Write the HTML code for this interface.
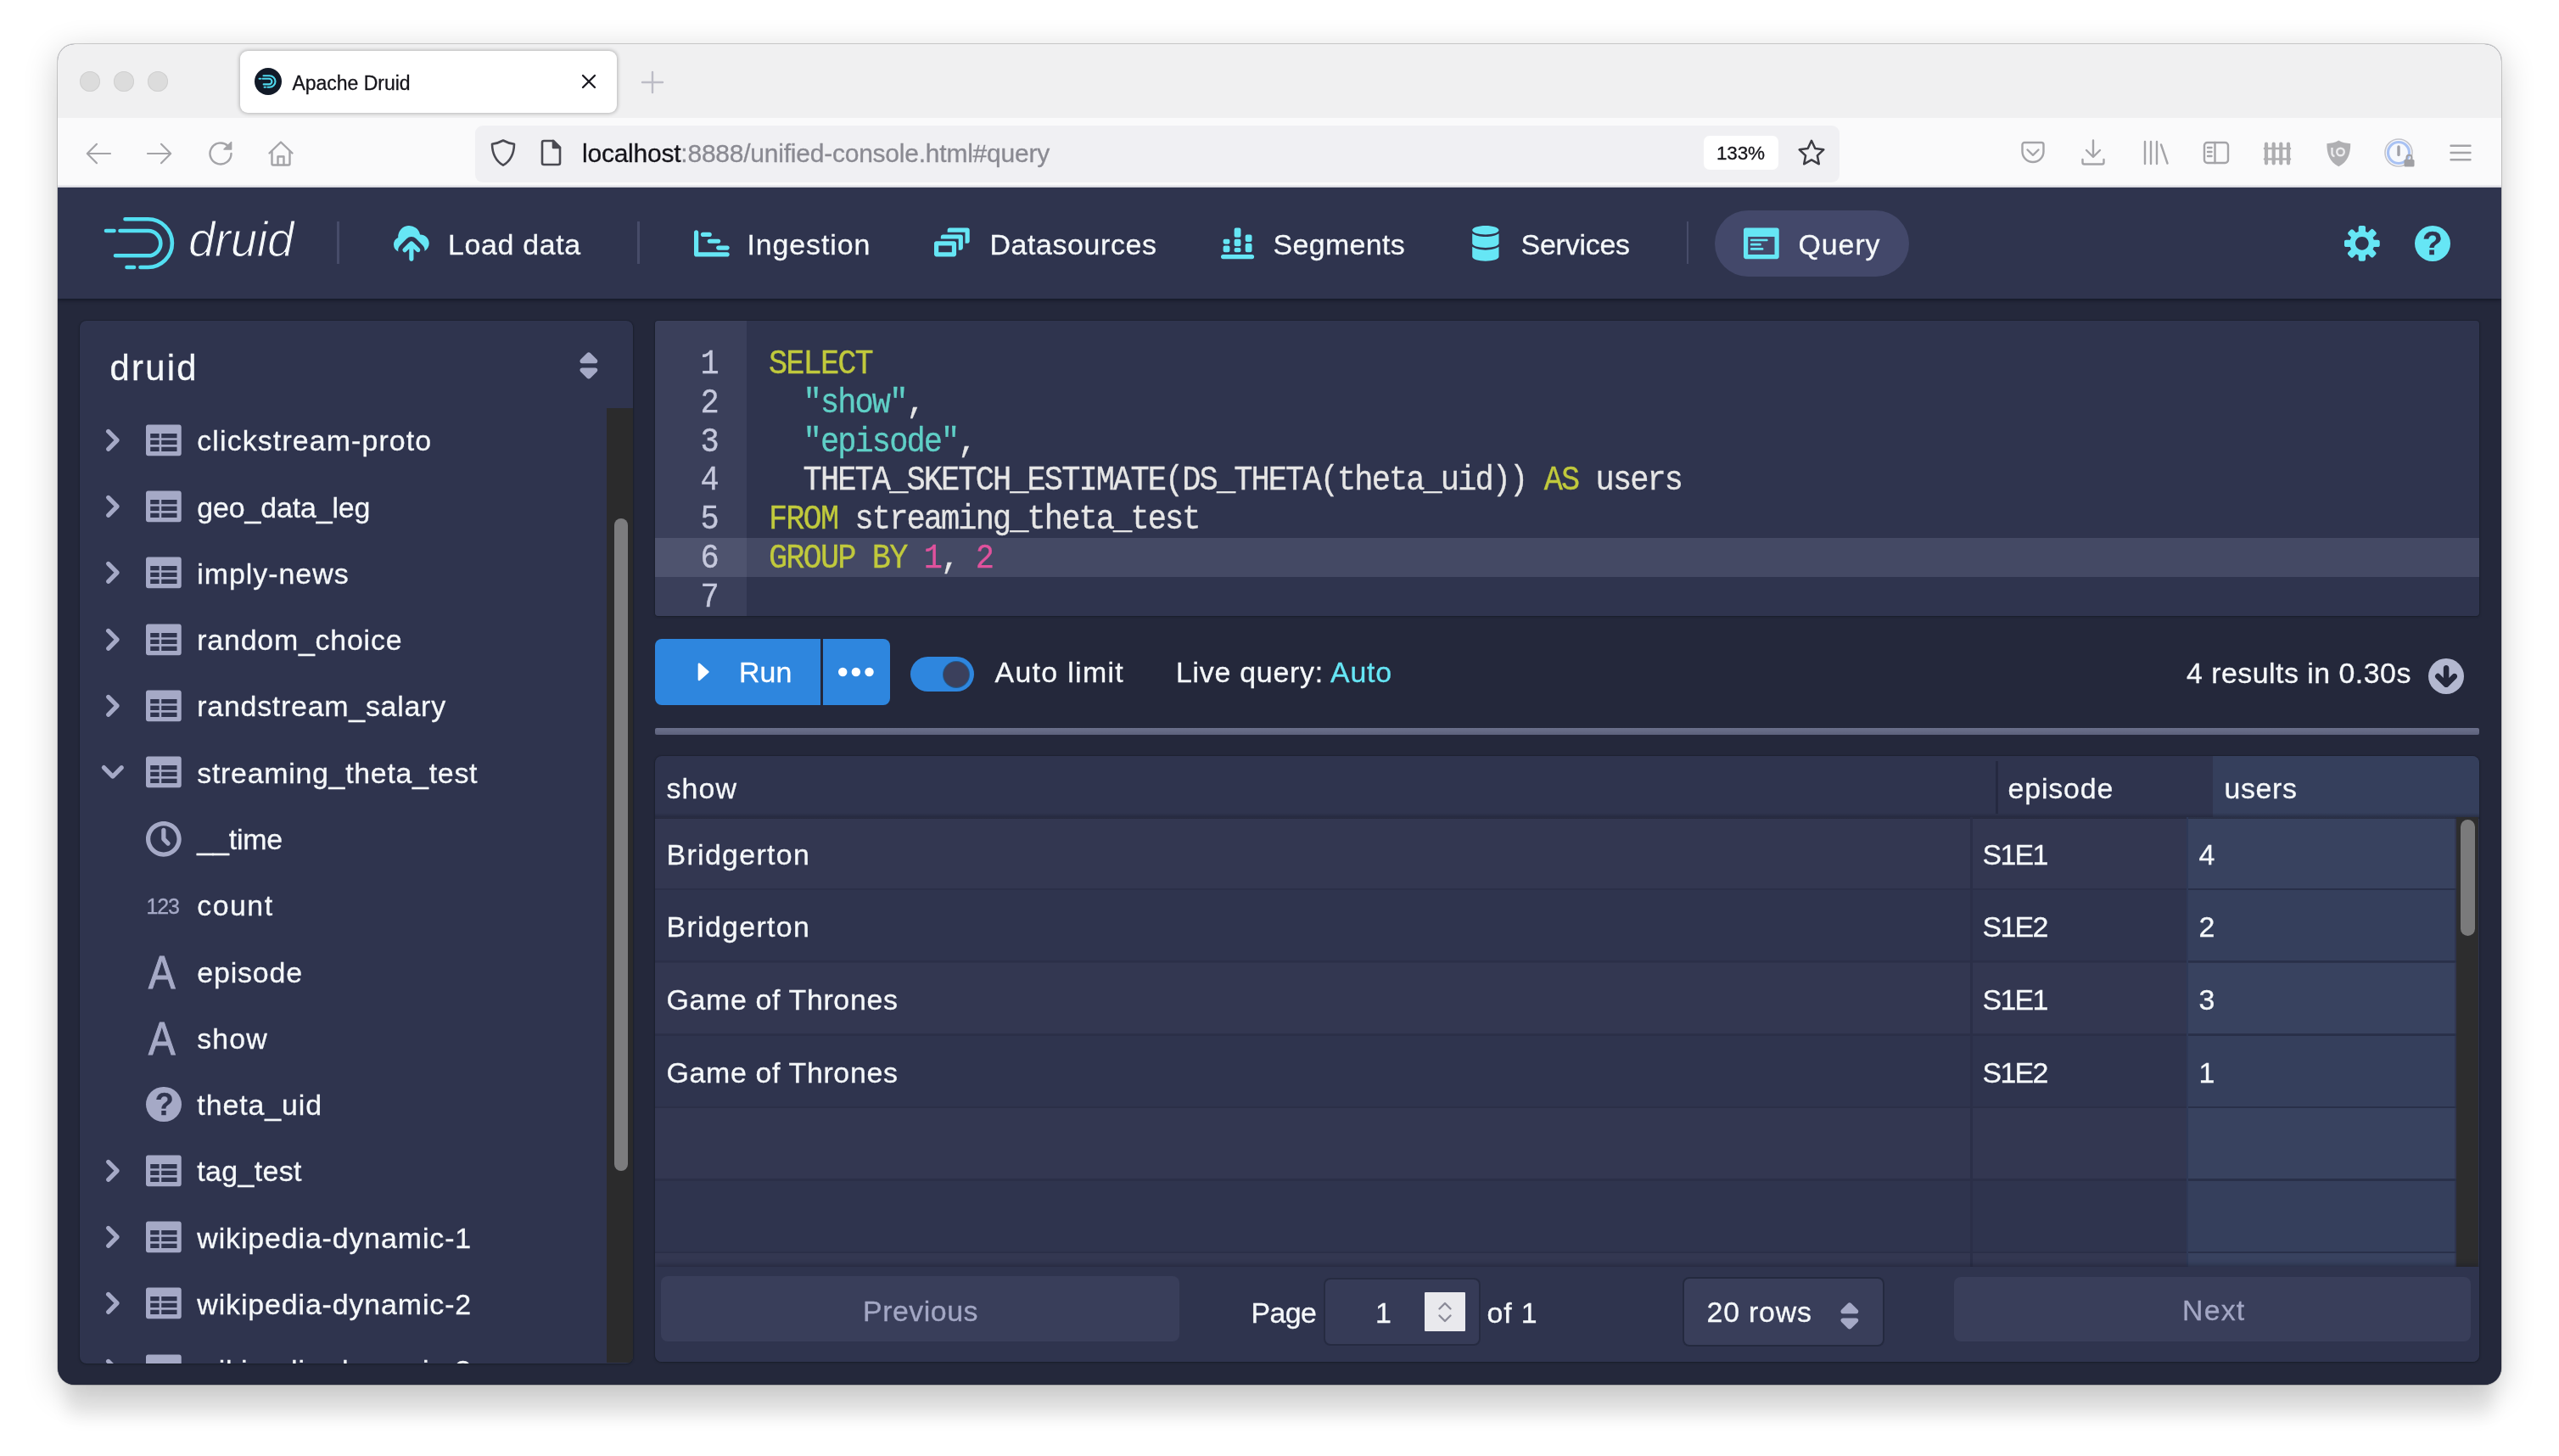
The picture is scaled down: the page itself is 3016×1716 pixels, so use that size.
<!DOCTYPE html>
<html lang="en"><head>
<meta charset="utf-8">
<title>Apache Druid</title>
<style>
*{box-sizing:border-box;margin:0;padding:0}
html,body{width:3016px;height:1716px;overflow:hidden;background:#fff}
body{position:relative;font-family:"Liberation Sans",sans-serif;color:#f5f8fa;font-size:33.9px}
.abs{position:absolute}
svg{overflow:visible}
.t{position:absolute;white-space:pre;line-height:1;font-family:"Liberation Sans",sans-serif;-webkit-text-stroke:.3px}
.mono{font-family:"Liberation Mono",monospace}
#shadow{position:absolute;left:68px;top:52px;width:2880px;height:1580px;border-radius:20px;
 box-shadow:0 0 0 1px rgba(0,0,0,.17),0 10px 40px rgba(0,0,0,.20),0 48px 20px -10px rgba(0,0,0,.08)}
#win{position:absolute;left:68px;top:52px;width:2880px;height:1580px;border-radius:20px;overflow:hidden;background:#24283b}
#pg{position:absolute;left:-68px;top:-52px;width:3016px;height:1716px;will-change:transform}
</style>
</head>
<body>
<div id="shadow"></div>
<div id="win"><div id="pg">
<div class="abs" style="left:68px;top:52px;width:2880px;height:87px;background:#f0f0f1"></div>
<div class="abs" style="left:68px;top:139px;width:2880px;height:82px;background:#fafafb"></div>
<div class="abs" style="left:68px;top:218px;width:2880px;height:3px;background:linear-gradient(#f2f2f6,#dcdce4)"></div>
<div class="abs" style="left:93.6px;top:84.0px;width:24.0px;height:24.0px;border-radius:50%;background:#dcdcdc;box-shadow:inset 0 0 0 1px #d0d0d0"></div>
<div class="abs" style="left:133.6px;top:84.0px;width:24.0px;height:24.0px;border-radius:50%;background:#dcdcdc;box-shadow:inset 0 0 0 1px #d0d0d0"></div>
<div class="abs" style="left:173.6px;top:84.0px;width:24.0px;height:24.0px;border-radius:50%;background:#dcdcdc;box-shadow:inset 0 0 0 1px #d0d0d0"></div>
<div class="abs" style="left:283.0px;top:60.0px;width:444.0px;height:72.5px;border-radius:9px;background:#fff;box-shadow:0 0 4px 1px rgba(0,0,0,.25)"></div>
<svg class="abs" style="left:300px;top:80px" width="32" height="32" viewBox="0 0 32 32"><circle cx="16" cy="16" r="16" fill="#121a28"></circle><g fill="none" stroke="#4fd8ee" stroke-width="2.1" stroke-linecap="round"><path d="M10.5 9.2h7.2a6.8 6.8 0 010 13.6h-2.3"></path><path d="M9.5 12.8h7.6a3.3 3.3 0 010 6.6h-6.4"></path><path d="M5.6 12.8h1.6M11.6 22.8h1.3"></path></g></svg>
<div class="t" style="left: 344.5px; top: 86.7px; font-size: 23px; color: rgb(21, 20, 26); letter-spacing: -0.03px;">Apache Druid</div>
<svg class="abs" style="left:684px;top:86px" width="20" height="20" viewBox="0 0 20 20"><path d="M3 3l14 14M17 3L3 17" stroke="#1c1b22" stroke-width="2.3" stroke-linecap="round" fill="none"></path></svg>
<svg class="abs" style="left:754px;top:82px" width="30" height="30" viewBox="0 0 30 30"><path d="M15 3v24M3 15h24" stroke="#bcbcc6" stroke-width="2.4" stroke-linecap="round" fill="none"></path></svg>
<svg class="abs" style="left:97.8px;top:163.0px" width="36" height="36" viewBox="0 0 36 36" fill="none" stroke="#a4a4a8" stroke-width="2.2" stroke-linecap="round" stroke-linejoin="round"><path d="M32 18H5M16 6.800L4.800 18 16 29.200"></path></svg>
<svg class="abs" style="left:170.4px;top:163.0px" width="36" height="36" viewBox="0 0 36 36" fill="none" stroke="#a4a4a8" stroke-width="2.2" stroke-linecap="round" stroke-linejoin="round"><path d="M4 18h27M20 6.800L31.200 18 20 29.200"></path></svg>
<svg class="abs" style="left:241.5px;top:163.0px" width="36" height="36" viewBox="0 0 36 36" fill="none" stroke="#a4a4a8" stroke-width="2.4" stroke-linecap="round" stroke-linejoin="round"><path d="M30.5 18a12.5 12.5 0 11-4-9.2"></path><path d="M30.6 4.5v8.6h-8.6z" fill="#a4a4a8" stroke-width="1.5"></path></svg>
<svg class="abs" style="left:313.0px;top:163.0px" width="36" height="36" viewBox="0 0 36 36" fill="none" stroke="#a4a4a8" stroke-width="2.4" stroke-linecap="round" stroke-linejoin="round"><path d="M4.5 17.5L18 4.5l13.500 13"></path><path d="M7.500 15.5V30a1.500 1.500 0 001.500 1.500h18A1.500 1.500 0 0028.500 30V15.500"></path><path d="M14.500 31V21.500h7V31"></path></svg>
<div class="abs" style="left:560.0px;top:148.0px;width:1608.0px;height:67.0px;border-radius:9px;background:#f0f0f3"></div>
<svg class="abs" style="left:574.8px;top:161.8px" width="36" height="36" viewBox="0 0 36 36" fill="none" stroke="#4a4a52" stroke-width="2.6" stroke-linecap="round" stroke-linejoin="round"><path d="M18 3.500c4.500 2.600 8.500 3.700 13 4.200-.2 11.500-4 19.800-13 25-9-5.200-12.800-13.500-13-25 4.500-.5 8.500-1.600 13-4.200z"></path></svg>
<svg class="abs" style="left:630.8px;top:162.0px" width="36" height="36" viewBox="0 0 36 36" fill="none" stroke="#4a4a52" stroke-width="2.6" stroke-linecap="round" stroke-linejoin="round"><path d="M8 6a2 2 0 012-2h11l8 8v18a2 2 0 01-2 2H10a2 2 0 01-2-2z"></path><path d="M21 4v8h8z" fill="#4a4a52"></path></svg>
<div class="t" style="left: 686px; top: 166.1px; font-size: 30px; color: rgb(138, 138, 146); letter-spacing: -0.23px;"><span style="color:#15141a">localhost</span>:8888/unified-console.html#query</div>
<div class="abs" style="left:2008.0px;top:160.0px;width:87.5px;height:39.5px;border-radius:7px;background:#fff"></div>
<div class="t" style="left: 2023px; top: 169.5px; font-size: 22.5px; color: rgb(21, 20, 26); letter-spacing: -0.16px;">133%</div>
<svg class="abs" style="left:2116.6px;top:161.5px" width="36" height="36" viewBox="0 0 36 36" fill="none" stroke="#3d3d44" stroke-width="2.5" stroke-linecap="round" stroke-linejoin="round"><path d="M18 3.800l4.300 9.200 10 1.300-7.400 7 1.900 10L18 26.400 9.200 31.300l1.900-10-7.400-7 10-1.300z"></path></svg>
<svg class="abs" style="left:2378.0px;top:162.0px" width="36" height="36" viewBox="0 0 36 36" fill="none" stroke="#a4a4a8" stroke-width="2.4" stroke-linecap="round" stroke-linejoin="round"><path d="M5.500 8.500a2.500 2.500 0 012.500-2.500h20a2.500 2.500 0 012.500 2.500v8a12.500 12.500 0 01-25 0z"></path><path d="M11.500 14.500L18 20.800l6.500-6.300"></path></svg>
<svg class="abs" style="left:2449.0px;top:162.0px" width="36" height="36" viewBox="0 0 36 36" fill="none" stroke="#a4a4a8" stroke-width="2.4" stroke-linecap="round" stroke-linejoin="round"><path d="M18 3.500v19M10 15l8 8 8-8M5.500 26v3.500a2 2 0 002 2h21a2 2 0 002-2V26"></path></svg>
<svg class="abs" style="left:2522.0px;top:162.0px" width="36" height="36" viewBox="0 0 36 36" fill="none" stroke="#a4a4a8" stroke-width="2.4" stroke-linecap="round" stroke-linejoin="round"><path d="M6 5v26M13 5v26M20 5v26M25 8.500l7.500 22"></path></svg>
<svg class="abs" style="left:2593.7px;top:162.0px" width="36" height="36" viewBox="0 0 36 36" fill="none" stroke="#a4a4a8" stroke-width="2.4" stroke-linecap="round" stroke-linejoin="round"><rect x="4" y="6" width="28" height="24" rx="3.500"></rect><path d="M16.500 6v24M8 12h4.500M8 17h4.500M8 22h4.500"></path></svg>
<svg class="abs" style="left:2665.7px;top:162.0px" width="36" height="36" viewBox="0 0 36 36" fill="none" stroke="#aeaeb1" stroke-width="2.4" stroke-linecap="round" stroke-linejoin="round"><path d="M5 7.500v23M13.700 7.500v23M22.300 7.500v23M31 7.500v23" stroke-width="4.200"></path><path d="M3 13h30M3 25.500h30" stroke-width="2.600"></path></svg>
<svg class="abs" style="left:2738.700px;top:163px" width="34" height="36" viewBox="0 0 34 36"><path d="M17 1.500c4.500 3 9.500 3.600 15 3.800 0 13-3.500 23-15 29.200C5.500 28.300 2 18.300 2 5.300c5.500-.2 10.500-.8 15-3.800z" fill="#b0b0b3" transform="translate(1.500 1.200) scale(.93)"></path><circle cx="19.500" cy="16" r="4.300" fill="none" stroke="#ececee" stroke-width="2.400"></circle><path d="M9.500 11v7a3 3 0 003 3" fill="none" stroke="#ececee" stroke-width="2.400"></path></svg>
<svg class="abs" style="left:2809px;top:161px" width="42" height="40" viewBox="0 0 42 40"><circle cx="18" cy="19" r="12.500" fill="#f6f8fc" stroke="#a9c2f3" stroke-width="3.200"></circle><circle cx="18" cy="19" r="16" fill="none" stroke="#c4c4ca" stroke-width="1.600"></circle><path d="M18 12v9.500" stroke="#a0a0a8" stroke-width="3.400" stroke-linecap="round"></path><rect x="24.500" y="27" width="12" height="8.500" rx="1.500" fill="#a0a0a4"></rect><path d="M27.500 27v-2.200a3 3 0 016 0v2.200" fill="none" stroke="#a0a0a4" stroke-width="2"></path></svg>
<svg class="abs" style="left:2881.6px;top:162.0px" width="36" height="36" viewBox="0 0 36 36" fill="none" stroke="#a4a4a8" stroke-width="2.4" stroke-linecap="round" stroke-linejoin="round"><path d="M6.500 9.700h23M6.500 18h23M6.500 26.300h23"></path></svg>
<div class="abs" style="left:68px;top:221px;width:2880px;height:1411px;background:#24283b"></div>
<div class="abs" style="left:68px;top:221px;width:2880px;height:131px;background:#2f344e;box-shadow:0 2px 4px rgba(10,12,25,.55)"></div>
<svg class="abs" style="left:110px;top:240px" width="110" height="90" viewBox="110 240 110 90" fill="none" stroke="#53dff2" stroke-width="4.600" stroke-linecap="round"><path d="M147.500 258.200H174.500a28.400 28.400 0 010 56.800H165.500"></path><path d="M149.500 315h8.500"></path><path d="M141.500 272H174.700a14.650 14.650 0 010 29.300H136"></path><path d="M125 272h9.500"></path></svg>
<div class="t" style="left:222.0px;top:255.0px;font-size:56.5px;color:#f5f8fa;font-style:italic;letter-spacing:-.3px;-webkit-text-stroke:1.1px #2f344e">druid</div>
<div class="abs" style="left:397.0px;top:261.0px;width:2.6px;height:50.0px;background:#474c69"></div>
<div class="abs" style="left:751.0px;top:261.0px;width:2.6px;height:50.0px;background:#474c69"></div>
<div class="abs" style="left:1987.5px;top:261.0px;width:2.6px;height:50.0px;background:#474c69"></div>
<svg class="abs" style="left:463.9px;top:265.9px" width="41.74" height="41.74" viewBox="0 0 16 16"><path d="M8.71 7.29C8.53 7.11 8.28 7 8 7s-.53.11-.71.29l-3 3a1.003 1.003 0 001.42 1.42L7 10.41V15c0 .55.45 1 1 1s1-.45 1-1v-4.59l1.29 1.29c.18.19.43.3.71.3a1.003 1.003 0 00.71-1.71l-3-3zM12 4c-.03 0-.07 0-.1.01A5 5 0 002 5c0 .11.01.22.02.33a3.495 3.495 0 00.07 6.37c-.05-.23-.09-.46-.09-.7 0-.83.34-1.58.88-2.12l3-3a2.993 2.993 0 014.24 0l3 3c.54.54.88 1.29.88 2.12 0 .16-.02.32-.05.47C15.17 10.78 16 9.5 16 8c0-2.21-1.79-4-4-4z" fill="#66e6f5" fill-rule="evenodd"></path></svg>
<div class="t" style="left: 528px; top: 271.9px; font-size: 33.9px; color: rgb(245, 248, 250); letter-spacing: 0.68px;">Load data</div>
<svg class="abs" style="left:817.5px;top:265.9px" width="41.74" height="41.74" viewBox="0 0 16 16"><path d="M4 5h3c.55 0 1-.45 1-1s-.45-1-1-1H4c-.55 0-1 .45-1 1s.45 1 1 1zM7 6c-.55 0-1 .45-1 1s.45 1 1 1h4c.55 0 1-.45 1-1s-.45-1-1-1H7zM11 9c-.55 0-1 .45-1 1s.45 1 1 1h4c.55 0 1-.45 1-1s-.45-1-1-1h-4zM15 12H2V3c0-.55-.45-1-1-1s-1 .45-1 1v10c0 .55.45 1 1 1h14c.55 0 1-.45 1-1s-.45-1-1-1z" fill="#66e6f5" fill-rule="evenodd"></path></svg>
<div class="t" style="left: 880.5px; top: 271.9px; font-size: 33.9px; color: rgb(245, 248, 250); letter-spacing: 0.9px;">Ingestion</div>
<svg class="abs" style="left:1100.7px;top:265.9px" width="41.74" height="41.74" viewBox="0 0 16 16"><path d="M12 3.98H4c-.55 0-1 .45-1 1v1h8v5h1c.55 0 1-.45 1-1v-5c0-.55-.45-1-1-1zm3-3H7c-.55 0-1 .45-1 1v1h8v5h1c.55 0 1-.45 1-1v-5c0-.55-.45-1-1-1zm-6 6H1c-.55 0-1 .45-1 1v5c0 .55.45 1 1 1h8c.55 0 1-.45 1-1v-5c0-.55-.45-1-1-1zm-1 5H2v-3h6v3z" fill="#66e6f5" fill-rule="evenodd"></path></svg>
<div class="t" style="left: 1166.5px; top: 271.9px; font-size: 33.9px; color: rgb(245, 248, 250); letter-spacing: 0.61px;">Datasources</div>
<svg class="abs" style="left:1438.5px;top:265.9px" width="41.74" height="41.74" viewBox="0 0 16 16"><path d="M1.8 6h1.4a0.8 0.8 0 0 1 0.8 0.8v0.7a0.8 0.8 0 0 1 -0.8 0.8h-1.4a0.8 0.8 0 0 1 -0.8 -0.8v-0.7a0.8 0.8 0 0 1 0.8 -0.8zM1.8 9h1.4a0.8 0.8 0 0 1 0.8 0.8v1.4a0.8 0.8 0 0 1 -0.8 0.8h-1.4a0.8 0.8 0 0 1 -0.8 -0.8v-1.4a0.8 0.8 0 0 1 0.8 -0.8zM6.8 1h1.4a0.8 0.8 0 0 1 0.8 0.8v2.7a0.8 0.8 0 0 1 -0.8 0.8h-1.4a0.8 0.8 0 0 1 -0.8 -0.8v-2.7a0.8 0.8 0 0 1 0.8 -0.8zM6.8 6h1.4a0.8 0.8 0 0 1 0.8 0.8v1.7a0.8 0.8 0 0 1 -0.8 0.8h-1.4a0.8 0.8 0 0 1 -0.8 -0.8v-1.7a0.8 0.8 0 0 1 0.8 -0.8zM6.7 10h1.6a0.7 0.7 0 0 1 0.7 0.7v0.6a0.7 0.7 0 0 1 -0.7 0.7h-1.6a0.7 0.7 0 0 1 -0.7 -0.7v-0.6a0.7 0.7 0 0 1 0.7 -0.7zM11.8 4h1.4a0.8 0.8 0 0 1 0.8 0.8v1.7a0.8 0.8 0 0 1 -0.8 0.8h-1.4a0.8 0.8 0 0 1 -0.8 -0.8v-1.7a0.8 0.8 0 0 1 0.8 -0.8zM11.8 8h1.4a0.8 0.8 0 0 1 0.8 0.8v2.4a0.8 0.8 0 0 1 -0.8 0.8h-1.4a0.8 0.8 0 0 1 -0.8 -0.8v-2.4a0.8 0.8 0 0 1 0.8 -0.8zM0.99 13h13.02a0.99 0.99 0 0 1 0.99 0.99v0.02a0.99 0.99 0 0 1 -0.99 0.99h-13.02a0.99 0.99 0 0 1 -0.99 -0.99v-0.02a0.99 0.99 0 0 1 0.99 -0.99z" fill="#66e6f5" fill-rule="evenodd"></path></svg>
<div class="t" style="left: 1500.5px; top: 271.9px; font-size: 33.9px; color: rgb(245, 248, 250); letter-spacing: 0.36px;">Segments</div>
<svg class="abs" style="left:1729.7px;top:265.9px" width="41.74" height="41.74" viewBox="0 0 16 16"><path d="M8 4c3.31 0 6-.9 6-2s-2.69-2-6-2C4.68 0 2 .9 2 2s2.68 2 6 2zm-6-.48V8c0 1.1 2.69 2 6 2s6-.9 6-2V3.52C12.78 4.4 10.56 5 8 5s-4.78-.6-6-1.48zm0 6V14c0 1.1 2.69 2 6 2s6-.9 6-2V9.52C12.78 10.4 10.56 11 8 11s-4.78-.6-6-1.48z" fill="#66e6f5" fill-rule="evenodd"></path></svg>
<div class="t" style="left: 1792.5px; top: 271.9px; font-size: 33.9px; color: rgb(245, 248, 250); letter-spacing: -0.2px;">Services</div>
<div class="abs" style="left:2021.2px;top:247.6px;width:228.6px;height:78.5px;border-radius:40px;background:#43486a"></div>
<svg class="abs" style="left:2054.5px;top:265.9px" width="41.74" height="41.74" viewBox="0 0 16 16"><path d="M3.5 7h7c.28 0 .5-.22.5-.5s-.22-.5-.5-.5h-7c-.28 0-.5.22-.5.5s.22.5.5.5zM15 1H1c-.55 0-1 .45-1 1v12c0 .55.45 1 1 1h14c.55 0 1-.45 1-1V2c0-.55-.45-1-1-1zm-1 12H2V5h12v8zM3.5 9h4c.28 0 .5-.22.5-.5S7.78 8 7.5 8h-4c-.28 0-.5.22-.5.5s.22.5.5.5zm0 2h5c.28 0 .5-.22.5-.5s-.22-.5-.5-.5h-5c-.28 0-.5.22-.5.5s.22.5.5.5z" fill="#66e6f5" fill-rule="evenodd"></path></svg>
<div class="t" style="left: 2119.5px; top: 271.9px; font-size: 33.9px; color: rgb(245, 248, 250); letter-spacing: 0.94px;">Query</div>
<svg class="abs" style="left:2762.8px;top:266.0px" width="41.74" height="41.74" viewBox="0 0 16 16"><path d="M15.19 6.39h-1.85c-.11-.37-.27-.71-.45-1.04l1.36-1.36c.31-.31.31-.82 0-1.13l-1.13-1.13a.803.803 0 00-1.13 0l-1.36 1.36c-.33-.17-.67-.33-1.04-.44V.79c0-.44-.36-.8-.8-.8h-1.6c-.44 0-.8.36-.8.8v1.86c-.39.12-.75.28-1.1.47l-1.3-1.3c-.3-.3-.79-.3-1.09 0L1.82 2.91c-.3.3-.3.79 0 1.09l1.3 1.3c-.2.34-.36.7-.48 1.09H.79c-.44 0-.8.36-.8.8v1.6c0 .44.36.8.8.8h1.85c.11.37.27.71.45 1.04l-1.36 1.36c-.31.31-.31.82 0 1.13l1.13 1.13c.31.31.82.31 1.13 0l1.36-1.36c.33.18.67.33 1.04.44v1.86c0 .44.36.8.8.8h1.6c.44 0 .8-.36.8-.8v-1.86c.39-.12.75-.28 1.1-.47l1.3 1.3c.3.3.79.3 1.09 0l1.09-1.09c.3-.3.3-.79 0-1.09l-1.3-1.3c.19-.35.36-.71.48-1.1h1.85c.44 0 .8-.36.8-.8v-1.6a.816.816 0 00-.81-.79zm-7.2 4.6c-1.66 0-3-1.34-3-3s1.34-3 3-3 3 1.34 3 3-1.34 3-3 3z" fill="#66e6f5" fill-rule="evenodd"></path></svg>
<div class="abs" style="left:2845.5px;top:266.0px;width:42.0px;height:42.0px;border-radius:50%;background:#66e6f5"></div>
<div class="t" style="left:2855.1px;top:267.0px;font-size:39px;color:#2f344e;font-weight:bold">?</div>
<div class="abs" style="left:94px;top:378px;width:652px;height:1229px;background:#2f344e;border-radius:8px;overflow:hidden;box-shadow:0 0 0 1px rgba(16,22,26,.2),0 1px 3px rgba(16,22,26,.4)">
<div class="t" style="left: 35.5px; top: 34.5px; font-size: 41.74px; color: rgb(245, 248, 250); letter-spacing: 2.29px;">druid</div>
<svg class="abs" style="left:578.8px;top:32.2px" width="41.74" height="41.74" viewBox="0 0 16 16"><path d="M5 7h6a1.003 1.003 0 00.71-1.71l-3-3C8.53 2.11 8.28 2 8 2s-.53.11-.71.29l-3 3A1.003 1.003 0 005 7zm6 2H5a1.003 1.003 0 00-.71 1.71l3 3c.18.18.43.29.71.29s.53-.11.71-.29l3-3A1.003 1.003 0 0011 9z" fill="#a5a9c6" fill-rule="evenodd"></path></svg>
<div class="abs" style="left:621.0px;top:103.0px;width:31.0px;height:1125.0px;background:#2b2b2c"></div>
<div class="abs" style="left:630.0px;top:233.0px;width:16.0px;height:769.0px;border-radius:8px;background:#7c7c7e"></div>
<svg class="abs" style="left:17.5px;top:119.9px" width="41.74" height="41.74" viewBox="0 0 16 16"><path d="M10.71 7.29l-4-4a1.003 1.003 0 00-1.42 1.42L8.59 8 5.3 11.29c-.19.18-.3.43-.3.71a1.003 1.003 0 001.71.71l4-4c.18-.18.29-.43.29-.71 0-.28-.11-.53-.29-.71z" fill="#a5a9c6" fill-rule="evenodd"></path></svg>
<svg class="abs" style="left:78.2px;top:119.9px" width="41.74" height="41.74" viewBox="0 0 16 16"><path d="M15 1H1c-.6 0-1 .5-1 1v12c0 .6.4 1 1 1h14c.6 0 1-.4 1-1V2c0-.5-.4-1-1-1zM6 13H2v-2h4v2zm0-3H2V8h4v2zm0-3H2V5h4v2zm8 6H7v-2h7v2zm0-3H7V8h7v2zm0-3H7V5h7v2z" fill="#a5a9c6" fill-rule="evenodd"></path></svg>
<div class="t" style="left: 138.3px; top: 125.4px; font-size: 33.9px; color: rgb(245, 248, 250); letter-spacing: 1.12px;">clickstream-proto</div>
<svg class="abs" style="left:17.5px;top:198.2px" width="41.74" height="41.74" viewBox="0 0 16 16"><path d="M10.71 7.29l-4-4a1.003 1.003 0 00-1.42 1.42L8.59 8 5.3 11.29c-.19.18-.3.43-.3.71a1.003 1.003 0 001.71.71l4-4c.18-.18.29-.43.29-.71 0-.28-.11-.53-.29-.71z" fill="#a5a9c6" fill-rule="evenodd"></path></svg>
<svg class="abs" style="left:78.2px;top:198.2px" width="41.74" height="41.74" viewBox="0 0 16 16"><path d="M15 1H1c-.6 0-1 .5-1 1v12c0 .6.4 1 1 1h14c.6 0 1-.4 1-1V2c0-.5-.4-1-1-1zM6 13H2v-2h4v2zm0-3H2V8h4v2zm0-3H2V5h4v2zm8 6H7v-2h7v2zm0-3H7V8h7v2zm0-3H7V5h7v2z" fill="#a5a9c6" fill-rule="evenodd"></path></svg>
<div class="t" style="left: 138.3px; top: 203.7px; font-size: 33.9px; color: rgb(245, 248, 250); letter-spacing: -0.12px;">geo_data_leg</div>
<svg class="abs" style="left:17.5px;top:276.4px" width="41.74" height="41.74" viewBox="0 0 16 16"><path d="M10.71 7.29l-4-4a1.003 1.003 0 00-1.42 1.42L8.59 8 5.3 11.29c-.19.18-.3.43-.3.71a1.003 1.003 0 001.71.71l4-4c.18-.18.29-.43.29-.71 0-.28-.11-.53-.29-.71z" fill="#a5a9c6" fill-rule="evenodd"></path></svg>
<svg class="abs" style="left:78.2px;top:276.4px" width="41.74" height="41.74" viewBox="0 0 16 16"><path d="M15 1H1c-.6 0-1 .5-1 1v12c0 .6.4 1 1 1h14c.6 0 1-.4 1-1V2c0-.5-.4-1-1-1zM6 13H2v-2h4v2zm0-3H2V8h4v2zm0-3H2V5h4v2zm8 6H7v-2h7v2zm0-3H7V8h7v2zm0-3H7V5h7v2z" fill="#a5a9c6" fill-rule="evenodd"></path></svg>
<div class="t" style="left: 138.3px; top: 281.9px; font-size: 33.9px; color: rgb(245, 248, 250); letter-spacing: 0.98px;">imply-news</div>
<svg class="abs" style="left:17.5px;top:354.7px" width="41.74" height="41.74" viewBox="0 0 16 16"><path d="M10.71 7.29l-4-4a1.003 1.003 0 00-1.42 1.42L8.59 8 5.3 11.29c-.19.18-.3.43-.3.71a1.003 1.003 0 001.71.71l4-4c.18-.18.29-.43.29-.71 0-.28-.11-.53-.29-.71z" fill="#a5a9c6" fill-rule="evenodd"></path></svg>
<svg class="abs" style="left:78.2px;top:354.7px" width="41.74" height="41.74" viewBox="0 0 16 16"><path d="M15 1H1c-.6 0-1 .5-1 1v12c0 .6.4 1 1 1h14c.6 0 1-.4 1-1V2c0-.5-.4-1-1-1zM6 13H2v-2h4v2zm0-3H2V8h4v2zm0-3H2V5h4v2zm8 6H7v-2h7v2zm0-3H7V8h7v2zm0-3H7V5h7v2z" fill="#a5a9c6" fill-rule="evenodd"></path></svg>
<div class="t" style="left: 138.3px; top: 360.2px; font-size: 33.9px; color: rgb(245, 248, 250); letter-spacing: 0.79px;">random_choice</div>
<svg class="abs" style="left:17.5px;top:432.9px" width="41.74" height="41.74" viewBox="0 0 16 16"><path d="M10.71 7.29l-4-4a1.003 1.003 0 00-1.42 1.42L8.59 8 5.3 11.29c-.19.18-.3.43-.3.71a1.003 1.003 0 001.71.71l4-4c.18-.18.29-.43.29-.71 0-.28-.11-.53-.29-.71z" fill="#a5a9c6" fill-rule="evenodd"></path></svg>
<svg class="abs" style="left:78.2px;top:432.9px" width="41.74" height="41.74" viewBox="0 0 16 16"><path d="M15 1H1c-.6 0-1 .5-1 1v12c0 .6.4 1 1 1h14c.6 0 1-.4 1-1V2c0-.5-.4-1-1-1zM6 13H2v-2h4v2zm0-3H2V8h4v2zm0-3H2V5h4v2zm8 6H7v-2h7v2zm0-3H7V8h7v2zm0-3H7V5h7v2z" fill="#a5a9c6" fill-rule="evenodd"></path></svg>
<div class="t" style="left: 138.3px; top: 438.4px; font-size: 33.9px; color: rgb(245, 248, 250); letter-spacing: 0.76px;">randstream_salary</div>
<svg class="abs" style="left:17.5px;top:511.2px" width="41.74" height="41.74" viewBox="0 0 16 16"><path d="M12 5c-.28 0-.53.11-.71.29L8 8.59l-3.29-3.3a1.003 1.003 0 00-1.42 1.42l4 4c.18.18.43.29.71.29s.53-.11.71-.29l4-4A1.003 1.003 0 0012 5z" fill="#a5a9c6" fill-rule="evenodd"></path></svg>
<svg class="abs" style="left:78.2px;top:511.2px" width="41.74" height="41.74" viewBox="0 0 16 16"><path d="M15 1H1c-.6 0-1 .5-1 1v12c0 .6.4 1 1 1h14c.6 0 1-.4 1-1V2c0-.5-.4-1-1-1zM6 13H2v-2h4v2zm0-3H2V8h4v2zm0-3H2V5h4v2zm8 6H7v-2h7v2zm0-3H7V8h7v2zm0-3H7V5h7v2z" fill="#a5a9c6" fill-rule="evenodd"></path></svg>
<div class="t" style="left: 138.3px; top: 516.7px; font-size: 33.9px; color: rgb(245, 248, 250); letter-spacing: 0.72px;">streaming_theta_test</div>
<svg class="abs" style="left:78.2px;top:589.5px" width="41.74" height="41.74" viewBox="0 0 16 16"><path d="M8 0C3.58 0 0 3.58 0 8s3.58 8 8 8 8-3.58 8-8-3.58-8-8-8zm0 14c-3.31 0-6-2.69-6-6s2.69-6 6-6 6 2.69 6 6-2.69 6-6 6zm1-6.41V4c0-.55-.45-1-1-1s-1 .45-1 1v4c0 .28.11.53.29.71l2 2a1.003 1.003 0 001.42-1.42L9 7.59z" fill="#a5a9c6" fill-rule="evenodd"></path></svg>
<div class="t" style="left: 138.3px; top: 595px; font-size: 33.9px; color: rgb(245, 248, 250); letter-spacing: -0.17px;">__time</div>
<div class="t" style="left:78.5px;top:678.2px;font-size:25px;color:#a5a9c6;letter-spacing:-1.200px">123</div>
<div class="t" style="left: 138.3px; top: 673.2px; font-size: 33.9px; color: rgb(245, 248, 250); letter-spacing: 1.47px;">count</div>
<div class="t" style="left:80.5px;top:741.0px;font-size:55px;color:#a5a9c6;transform:scaleX(.86);transform-origin:0 0;-webkit-text-stroke:1.1px #a5a9c6">A</div>
<div class="t" style="left: 138.3px; top: 751.5px; font-size: 33.9px; color: rgb(245, 248, 250); letter-spacing: 0.84px;">episode</div>
<div class="t" style="left:80.5px;top:819.3px;font-size:55px;color:#a5a9c6;transform:scaleX(.86);transform-origin:0 0;-webkit-text-stroke:1.1px #a5a9c6">A</div>
<div class="t" style="left: 138.3px; top: 829.7px; font-size: 33.9px; color: rgb(245, 248, 250); letter-spacing: 1.12px;">show</div>
<div class="abs" style="left:78.2px;top:902.5px;width:41.7px;height:41.7px;border-radius:50%;background:#a5a9c6"></div>
<div class="t" style="left:88.7px;top:905.8px;font-size:36px;color:#2f344e;font-weight:bold">?</div>
<div class="t" style="left: 138.3px; top: 908px; font-size: 33.9px; color: rgb(245, 248, 250); letter-spacing: 0.92px;">theta_uid</div>
<svg class="abs" style="left:17.5px;top:980.8px" width="41.74" height="41.74" viewBox="0 0 16 16"><path d="M10.71 7.29l-4-4a1.003 1.003 0 00-1.42 1.42L8.59 8 5.3 11.29c-.19.18-.3.43-.3.71a1.003 1.003 0 001.71.71l4-4c.18-.18.29-.43.29-.71 0-.28-.11-.53-.29-.71z" fill="#a5a9c6" fill-rule="evenodd"></path></svg>
<svg class="abs" style="left:78.2px;top:980.8px" width="41.74" height="41.74" viewBox="0 0 16 16"><path d="M15 1H1c-.6 0-1 .5-1 1v12c0 .6.4 1 1 1h14c.6 0 1-.4 1-1V2c0-.5-.4-1-1-1zM6 13H2v-2h4v2zm0-3H2V8h4v2zm0-3H2V5h4v2zm8 6H7v-2h7v2zm0-3H7V8h7v2zm0-3H7V5h7v2z" fill="#a5a9c6" fill-rule="evenodd"></path></svg>
<div class="t" style="left: 138.3px; top: 986.3px; font-size: 33.9px; color: rgb(245, 248, 250); letter-spacing: 0.36px;">tag_test</div>
<svg class="abs" style="left:17.5px;top:1059.0px" width="41.74" height="41.74" viewBox="0 0 16 16"><path d="M10.71 7.29l-4-4a1.003 1.003 0 00-1.42 1.42L8.59 8 5.3 11.29c-.19.18-.3.43-.3.71a1.003 1.003 0 001.71.71l4-4c.18-.18.29-.43.29-.71 0-.28-.11-.53-.29-.71z" fill="#a5a9c6" fill-rule="evenodd"></path></svg>
<svg class="abs" style="left:78.2px;top:1059.0px" width="41.74" height="41.74" viewBox="0 0 16 16"><path d="M15 1H1c-.6 0-1 .5-1 1v12c0 .6.4 1 1 1h14c.6 0 1-.4 1-1V2c0-.5-.4-1-1-1zM6 13H2v-2h4v2zm0-3H2V8h4v2zm0-3H2V5h4v2zm8 6H7v-2h7v2zm0-3H7V8h7v2zm0-3H7V5h7v2z" fill="#a5a9c6" fill-rule="evenodd"></path></svg>
<div class="t" style="left: 138.3px; top: 1064.5px; font-size: 33.9px; color: rgb(245, 248, 250); letter-spacing: 0.88px;">wikipedia-dynamic-1</div>
<svg class="abs" style="left:17.5px;top:1137.3px" width="41.74" height="41.74" viewBox="0 0 16 16"><path d="M10.71 7.29l-4-4a1.003 1.003 0 00-1.42 1.42L8.59 8 5.3 11.29c-.19.18-.3.43-.3.71a1.003 1.003 0 001.71.71l4-4c.18-.18.29-.43.29-.71 0-.28-.11-.53-.29-.71z" fill="#a5a9c6" fill-rule="evenodd"></path></svg>
<svg class="abs" style="left:78.2px;top:1137.3px" width="41.74" height="41.74" viewBox="0 0 16 16"><path d="M15 1H1c-.6 0-1 .5-1 1v12c0 .6.4 1 1 1h14c.6 0 1-.4 1-1V2c0-.5-.4-1-1-1zM6 13H2v-2h4v2zm0-3H2V8h4v2zm0-3H2V5h4v2zm8 6H7v-2h7v2zm0-3H7V8h7v2zm0-3H7V5h7v2z" fill="#a5a9c6" fill-rule="evenodd"></path></svg>
<div class="t" style="left: 138.3px; top: 1142.8px; font-size: 33.9px; color: rgb(245, 248, 250); letter-spacing: 0.88px;">wikipedia-dynamic-2</div>
<svg class="abs" style="left:17.5px;top:1215.5px" width="41.74" height="41.74" viewBox="0 0 16 16"><path d="M10.71 7.29l-4-4a1.003 1.003 0 00-1.42 1.42L8.59 8 5.3 11.29c-.19.18-.3.43-.3.71a1.003 1.003 0 001.71.71l4-4c.18-.18.29-.43.29-.71 0-.28-.11-.53-.29-.71z" fill="#a5a9c6" fill-rule="evenodd"></path></svg>
<svg class="abs" style="left:78.2px;top:1215.5px" width="41.74" height="41.74" viewBox="0 0 16 16"><path d="M15 1H1c-.6 0-1 .5-1 1v12c0 .6.4 1 1 1h14c.6 0 1-.4 1-1V2c0-.5-.4-1-1-1zM6 13H2v-2h4v2zm0-3H2V8h4v2zm0-3H2V5h4v2zm8 6H7v-2h7v2zm0-3H7V8h7v2zm0-3H7V5h7v2z" fill="#a5a9c6" fill-rule="evenodd"></path></svg>
<div class="t" style="left: 138.3px; top: 1221px; font-size: 33.9px; color: rgb(245, 248, 250); letter-spacing: 0.88px;">wikipedia-dynamic-3</div>
</div>
<div class="abs" style="left:772px;top:378px;width:2150px;height:348px;background:#2f344e;border-radius:4px;overflow:hidden;box-shadow:0 0 0 1px rgba(16,22,26,.2),0 1px 3px rgba(16,22,26,.4)">
<div class="abs" style="left:0.0px;top:0.0px;width:107.5px;height:348.0px;background:#3a3f5a"></div>
<div class="abs" style="left:0.0px;top:256.0px;width:2150.0px;height:45.9px;background:#444964"></div>
<div class="abs" style="left:0.0px;top:256.0px;width:107.5px;height:45.9px;background:#4e536e"></div>
<div class="t mono" style="left:53.5px;top:33.7px;font-size:37.0px;color:#c5c8dc;letter-spacing:-1.90px;transform:scaleY(1.1);transform-origin:0 28.4px">1</div>
<div class="t mono" style="left:134.0px;top:33.7px;font-size:37.0px;color:#e6e6e6;letter-spacing:-1.90px;transform:scaleY(1.1);transform-origin:0 28.4px"><span style="color:#c0c93c">SELECT</span></div>
<div class="t mono" style="left:53.5px;top:79.6px;font-size:37.0px;color:#c5c8dc;letter-spacing:-1.90px;transform:scaleY(1.1);transform-origin:0 28.4px">2</div>
<div class="t mono" style="left:134.0px;top:79.6px;font-size:37.0px;color:#e6e6e6;letter-spacing:-1.90px;transform:scaleY(1.1);transform-origin:0 28.4px">  <span style="color:#5fcfc6">"show"</span><span style="color:#e6e6e6">,</span></div>
<div class="t mono" style="left:53.5px;top:125.5px;font-size:37.0px;color:#c5c8dc;letter-spacing:-1.90px;transform:scaleY(1.1);transform-origin:0 28.4px">3</div>
<div class="t mono" style="left:134.0px;top:125.5px;font-size:37.0px;color:#e6e6e6;letter-spacing:-1.90px;transform:scaleY(1.1);transform-origin:0 28.4px">  <span style="color:#5fcfc6">"episode"</span><span style="color:#e6e6e6">,</span></div>
<div class="t mono" style="left:53.5px;top:171.4px;font-size:37.0px;color:#c5c8dc;letter-spacing:-1.90px;transform:scaleY(1.1);transform-origin:0 28.4px">4</div>
<div class="t mono" style="left:134.0px;top:171.4px;font-size:37.0px;color:#e6e6e6;letter-spacing:-1.90px;transform:scaleY(1.1);transform-origin:0 28.4px">  <span style="color:#e6e6e6">THETA_SKETCH_ESTIMATE(DS_THETA(theta_uid)) </span><span style="color:#c0c93c">AS</span><span style="color:#e6e6e6"> users</span></div>
<div class="t mono" style="left:53.5px;top:217.3px;font-size:37.0px;color:#c5c8dc;letter-spacing:-1.90px;transform:scaleY(1.1);transform-origin:0 28.4px">5</div>
<div class="t mono" style="left:134.0px;top:217.3px;font-size:37.0px;color:#e6e6e6;letter-spacing:-1.90px;transform:scaleY(1.1);transform-origin:0 28.4px"><span style="color:#c0c93c">FROM</span><span style="color:#e6e6e6"> streaming_theta_test</span></div>
<div class="t mono" style="left:53.5px;top:263.2px;font-size:37.0px;color:#c5c8dc;letter-spacing:-1.90px;transform:scaleY(1.1);transform-origin:0 28.4px">6</div>
<div class="t mono" style="left:134.0px;top:263.2px;font-size:37.0px;color:#e6e6e6;letter-spacing:-1.90px;transform:scaleY(1.1);transform-origin:0 28.4px"><span style="color:#c0c93c">GROUP BY </span><span style="color:#e0529d">1</span><span style="color:#e6e6e6">, </span><span style="color:#e0529d">2</span></div>
<div class="t mono" style="left:53.5px;top:309.1px;font-size:37.0px;color:#c5c8dc;letter-spacing:-1.90px;transform:scaleY(1.1);transform-origin:0 28.4px">7</div>
</div>
<div class="abs" style="left:771.7px;top:753.2px;width:195.3px;height:78.2px;border-radius:8px 0 0 8px;background:#2e86de"></div>
<div class="abs" style="left:969.5px;top:753.2px;width:79.0px;height:78.2px;border-radius:0 8px 8px 0;background:#2e86de"></div>
<svg class="abs" style="left:806.5px;top:771.0px" width="41.74" height="41.74" viewBox="0 0 16 16"><path d="M11 8c0-.15-.07-.28-.17-.37l-4-3.5A.495.495 0 006 4.5v7a.495.495 0 00.83.37l4-3.5c.1-.09.17-.22.17-.37z" fill="#fff" fill-rule="evenodd"></path></svg>
<div class="t" style="left: 871px; top: 775.7px; font-size: 33.9px; color: rgb(255, 255, 255); letter-spacing: 0.11px;">Run</div>
<svg class="abs" style="left:988.2px;top:770.5px" width="41.74" height="41.74" viewBox="0 0 16 16"><path d="M2 6.03a2 2 0 100 4 2 2 0 100-4zM14 6.03a2 2 0 100 4 2 2 0 100-4zM8 6.03a2 2 0 100 4 2 2 0 100-4z" fill="#fff" fill-rule="evenodd"></path></svg>
<div class="abs" style="left:1072.6px;top:774.0px;width:75.0px;height:41.0px;border-radius:21px;background:#2e86de"></div>
<div class="abs" style="left:1111.5px;top:779.5px;width:30.0px;height:30.0px;border-radius:50%;background:#3b405c;box-shadow:0 0 0 1px rgba(16,22,26,.4)"></div>
<div class="t" style="left: 1172.5px; top: 775.7px; font-size: 33.9px; color: rgb(245, 248, 250); letter-spacing: 1.32px;">Auto limit</div>
<div class="t" style="left: 1386px; top: 775.7px; font-size: 33.9px; color: rgb(245, 248, 250); letter-spacing: 0.73px;">Live query: <span style="color:#66e6f5">Auto</span></div>
<div class="t" style="left: 2577px; top: 776.7px; font-size: 33.9px; color: rgb(245, 248, 250); letter-spacing: 0.48px;">4 results in 0.30s</div>
<div class="abs" style="left:2862.0px;top:775.6px;width:42.0px;height:42.0px;border-radius:50%;background:#b3b8d0"></div>
<svg class="abs" style="left:2856.9px;top:770.5px" width="52.17" height="52.17" viewBox="0 0 16 16"><path d="M11 7c-.28 0-.53.11-.71.29L9 8.59V5c0-.55-.45-1-1-1s-1 .45-1 1v3.59l-1.29-1.3a1.003 1.003 0 00-1.42 1.42l3 3c.18.18.43.29.71.29s.53-.11.71-.29l3-3A1.003 1.003 0 0011 7z" fill="#24283b" fill-rule="evenodd"></path></svg>
<div class="abs" style="left:772.0px;top:857.5px;width:2150.0px;height:8.5px;background:linear-gradient(#6b708b,#5d627c);border-radius:2px"></div>
<div class="abs" style="left:772px;top:891px;width:2150px;height:713.500px;background:#2f344e;border-radius:8px;overflow:hidden;box-shadow:0 0 0 1px rgba(16,22,26,.2),0 1px 3px rgba(16,22,26,.4)">
<div class="abs" style="left:1836.0px;top:0.0px;width:314.0px;height:72.0px;background:#353f5c"></div>
<div class="abs" style="left:1806.0px;top:72.0px;width:315.0px;height:530.0px;background:#353f5c"></div>
<div class="abs" style="left:1580.0px;top:6.0px;width:2.6px;height:62.0px;background:rgba(20,22,40,.35)"></div>
<div class="abs" style="left:0.0px;top:67.0px;width:2150.0px;height:7.0px;background:linear-gradient(rgba(30,33,52,0),rgba(30,33,52,.75))"></div>
<div class="t" style="left: 13.5px; top: 21.7px; font-size: 33.9px; color: rgb(245, 248, 250); letter-spacing: 1.12px;">show</div>
<div class="t" style="left: 1594.5px; top: 21.7px; font-size: 33.9px; color: rgb(245, 248, 250); letter-spacing: 0.84px;">episode</div>
<div class="t" style="left: 1849.5px; top: 21.7px; font-size: 33.9px; color: rgb(245, 248, 250); letter-spacing: 0.62px;">users</div>
<div class="abs" style="left:0.0px;top:72.2px;width:2123.0px;height:85.6px;background:rgba(255,255,255,.02)"></div>
<div class="abs" style="left:0.0px;top:155.8px;width:1806.0px;height:2.6px;background:#2b2f48"></div>
<div class="abs" style="left:1806.0px;top:155.8px;width:317.0px;height:2.6px;background:#293049"></div>
<div class="t" style="left: 13.5px; top: 99.7px; font-size: 33.9px; color: rgb(245, 248, 250); letter-spacing: 1.32px;">Bridgerton</div>
<div class="t" style="left: 1564.5px; top: 99.7px; font-size: 33.9px; color: rgb(245, 248, 250); letter-spacing: -1.69px;">S1E1</div>
<div class="t" style="left: 1819.5px; top: 99.7px; font-size: 33.9px; color: rgb(245, 248, 250); letter-spacing: 0.53px;">4</div>
<div class="abs" style="left:0.0px;top:241.4px;width:1806.0px;height:2.6px;background:#2b2f48"></div>
<div class="abs" style="left:1806.0px;top:241.4px;width:317.0px;height:2.6px;background:#293049"></div>
<div class="t" style="left: 13.5px; top: 185.3px; font-size: 33.9px; color: rgb(245, 248, 250); letter-spacing: 1.32px;">Bridgerton</div>
<div class="t" style="left: 1564.5px; top: 185.3px; font-size: 33.9px; color: rgb(245, 248, 250); letter-spacing: -1.69px;">S1E2</div>
<div class="t" style="left: 1819.5px; top: 185.3px; font-size: 33.9px; color: rgb(245, 248, 250); letter-spacing: 0.53px;">2</div>
<div class="abs" style="left:0.0px;top:243.4px;width:2123.0px;height:85.6px;background:rgba(255,255,255,.02)"></div>
<div class="abs" style="left:0.0px;top:327.0px;width:1806.0px;height:2.6px;background:#2b2f48"></div>
<div class="abs" style="left:1806.0px;top:327.0px;width:317.0px;height:2.6px;background:#293049"></div>
<div class="t" style="left: 13.5px; top: 270.9px; font-size: 33.9px; color: rgb(245, 248, 250); letter-spacing: 0.66px;">Game of Thrones</div>
<div class="t" style="left: 1564.5px; top: 270.9px; font-size: 33.9px; color: rgb(245, 248, 250); letter-spacing: -1.69px;">S1E1</div>
<div class="t" style="left: 1819.5px; top: 270.9px; font-size: 33.9px; color: rgb(245, 248, 250); letter-spacing: 0.53px;">3</div>
<div class="abs" style="left:0.0px;top:412.6px;width:1806.0px;height:2.6px;background:#2b2f48"></div>
<div class="abs" style="left:1806.0px;top:412.6px;width:317.0px;height:2.6px;background:#293049"></div>
<div class="t" style="left: 13.5px; top: 356.5px; font-size: 33.9px; color: rgb(245, 248, 250); letter-spacing: 0.66px;">Game of Thrones</div>
<div class="t" style="left: 1564.5px; top: 356.5px; font-size: 33.9px; color: rgb(245, 248, 250); letter-spacing: -1.69px;">S1E2</div>
<div class="t" style="left: 1819.5px; top: 356.5px; font-size: 33.9px; color: rgb(245, 248, 250); letter-spacing: 0.53px;">1</div>
<div class="abs" style="left:0.0px;top:414.6px;width:2123.0px;height:85.6px;background:rgba(255,255,255,.02)"></div>
<div class="abs" style="left:0.0px;top:498.2px;width:1806.0px;height:2.6px;background:#2b2f48"></div>
<div class="abs" style="left:1806.0px;top:498.2px;width:317.0px;height:2.6px;background:#293049"></div>
<div class="abs" style="left:0.0px;top:583.8px;width:1806.0px;height:2.6px;background:#2b2f48"></div>
<div class="abs" style="left:1806.0px;top:583.8px;width:317.0px;height:2.6px;background:#293049"></div>
<div class="abs" style="left:0.0px;top:585.8px;width:2123.0px;height:85.6px;background:rgba(255,255,255,.02)"></div>
<div class="abs" style="left:0.0px;top:669.4px;width:1806.0px;height:2.6px;background:#2b2f48"></div>
<div class="abs" style="left:1806.0px;top:669.4px;width:317.0px;height:2.6px;background:#293049"></div>
<div class="abs" style="left:1550.0px;top:72.0px;width:2.6px;height:530.0px;background:#2b2f48"></div>
<div class="abs" style="left:1805.0px;top:72.0px;width:1.5px;height:530.0px;background:#2f3957"></div>
<div class="abs" style="left:2122.8px;top:72.0px;width:26.2px;height:530.0px;background:#2d2d2e"></div>
<div class="abs" style="left:2127.6px;top:75.4px;width:17.2px;height:137.0px;border-radius:9px;background:#7a7a7b"></div>
<div class="abs" style="left:0.0px;top:602.0px;width:2150.0px;height:113.0px;background:#2f344e;box-shadow:0 -2px 6px rgba(20,22,38,.45)"></div>
<div class="abs" style="left:7.0px;top:612.6px;width:611.0px;height:77.5px;border-radius:8px;background:#393e5a"></div>
<div class="t" style="left: 245px; top: 637.5px; font-size: 33.9px; color: rgb(163, 167, 196); letter-spacing: 0.53px;">Previous</div>
<div class="t" style="left: 702.5px; top: 639.7px; font-size: 33.9px; color: rgb(245, 248, 250); letter-spacing: -0.63px;">Page</div>
<div class="abs" style="left:787.7px;top:614.7px;width:185.0px;height:80.5px;border-radius:8px;background:#363b57;box-shadow:inset 0 0 0 2px rgba(16,22,36,.42)"></div>
<div class="t" style="left: 849px; top: 639.7px; font-size: 33.9px; color: rgb(245, 248, 250); letter-spacing: 0.53px;">1</div>
<div class="abs" style="left:906.7px;top:632.0px;width:48.0px;height:46.0px;background:#e9e9ed;border-radius:1px"></div>
<svg class="abs" style="left:906.7px;top:632.0px" width="48" height="46" viewBox="0 0 48 46" fill="none" stroke="#8c8c99" stroke-width="2.400" stroke-linecap="round" stroke-linejoin="round"><path d="M17.500 19.500l6.500-6.500 6.500 6.500M17.500 27.500l6.500 6.500 6.500-6.500"></path></svg>
<div class="t" style="left: 980.5px; top: 639.7px; font-size: 33.9px; color: rgb(245, 248, 250); letter-spacing: 0.86px;">of 1</div>
<div class="abs" style="left:1211.0px;top:613.6px;width:237.5px;height:82.0px;border-radius:8px;background:#393e5a;box-shadow:inset 0 0 0 2px rgba(16,22,36,.5)"></div>
<div class="t" style="left: 1239.5px; top: 639.2px; font-size: 33.9px; color: rgb(245, 248, 250); letter-spacing: 0.79px;">20 rows</div>
<svg class="abs" style="left:1386.5px;top:639.3px" width="41.74" height="41.74" viewBox="0 0 16 16"><path d="M5 7h6a1.003 1.003 0 00.71-1.71l-3-3C8.53 2.11 8.28 2 8 2s-.53.11-.71.29l-3 3A1.003 1.003 0 005 7zm6 2H5a1.003 1.003 0 00-.71 1.71l3 3c.18.18.43.29.71.29s.53-.11.71-.29l3-3A1.003 1.003 0 0011 9z" fill="#a5a9c6" fill-rule="evenodd"></path></svg>
<div class="abs" style="left:1531.4px;top:613.6px;width:609.0px;height:76.5px;border-radius:8px;background:#393e5a"></div>
<div class="t" style="left: 1800px; top: 637.2px; font-size: 33.9px; color: rgb(163, 167, 196); letter-spacing: 1.17px;">Next</div>
</div>
</div></div>


</body></html>
